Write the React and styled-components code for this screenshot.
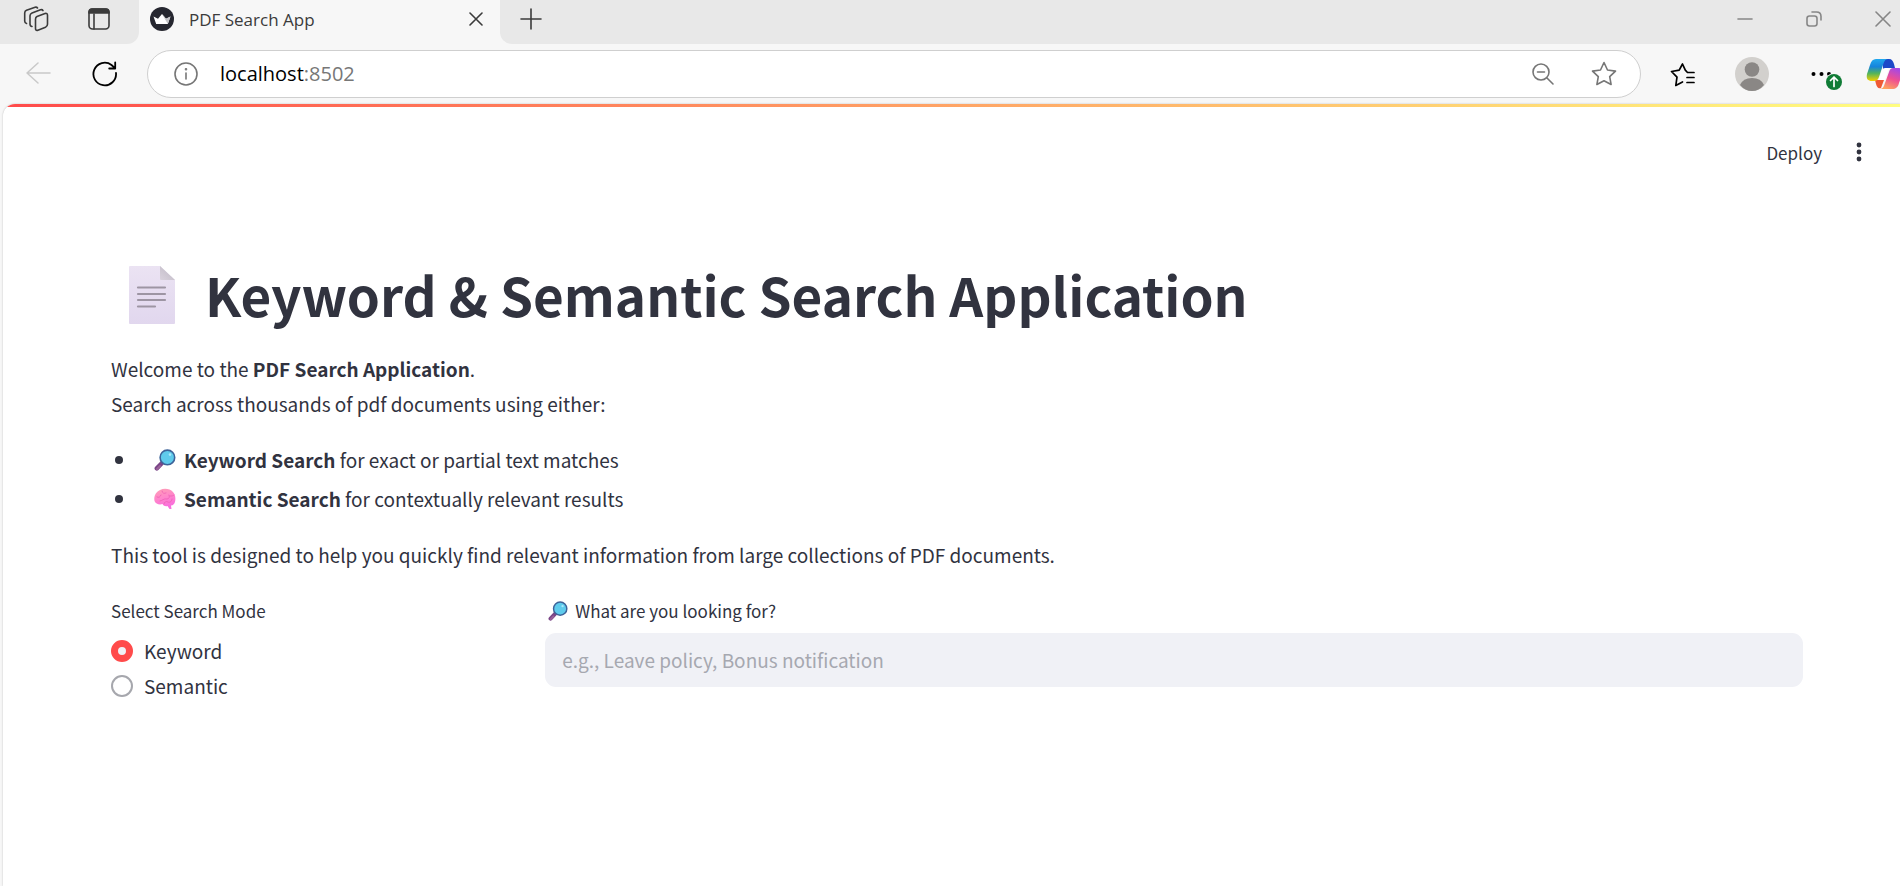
import React from "react";
import styled, { createGlobalStyle } from "styled-components";

const Global = createGlobalStyle`
  * { box-sizing: border-box; }
  html, body { margin: 0; padding: 0; background: #f7f7f7; }
  #root { min-height: 100vh; display: flex; flex-direction: column; }
  button { border: 0; padding: 0; background: none; font: inherit; color: inherit; cursor: pointer; }
  svg { display: block; flex: none; }
`;

const uiFont = `"Open Sans", "Noto Sans", sans-serif`;
const appFont = `"Noto Sans CJK SC", "Noto Sans", sans-serif`;

const TabStrip = styled.div`
  height: 44px;
  display: flex;
  background: #f7f7f7;
  font-family: ${uiFont};
  color: #3b3b3b;
`;
const StripStart = styled.div`
  width: 139px;
  padding-left: 23px;
  display: flex;
  align-items: center;
  gap: 38px;
  padding-bottom: 6px;
  background: #e8e8e8;
  border-bottom-right-radius: 12px;
`;
const StripEnd = styled.div`
  flex: 1;
  display: flex;
  align-items: center;
  padding: 0 9px 6px 20px;
  background: #e8e8e8;
  border-bottom-left-radius: 12px;
`;
const Tab = styled.div`
  width: 361px;
  display: flex;
  align-items: center;
  padding: 0 17px 6px 11px;
  font-size: 17px;
`;
const TabTitle = styled.span`
  flex: 1;
  padding-left: 15px;
  white-space: nowrap;
`;
const WindowButtons = styled.div`
  margin-left: auto;
  display: flex;
  gap: 53px;
  color: #868686;
`;

const Toolbar = styled.div`
  height: 60px;
  display: flex;
  align-items: center;
  padding-left: 26px;
  background: #f7f7f7;
  overflow: hidden;
`;
const NavButtons = styled.div`
  display: flex;
  width: 121px;
  gap: 40px;
`;
const AddressBar = styled.div`
  flex: 1;
  height: 48px;
  display: flex;
  align-items: center;
  padding: 0 23px 0 26px;
  background: #fff;
  border: 1px solid #cfcfcf;
  border-radius: 24px;
  color: #767676;
`;
const Address = styled.div`
  flex: 1;
  padding-left: 22px;
  font-family: ${uiFont};
  font-size: 20px;
  line-height: 28px;
  color: #777;
  b { font-weight: 400; color: #000; }
`;
const AddressActions = styled.div`
  display: flex;
  gap: 36px;
`;
const BrowserActions = styled.div`
  width: 259px;
  flex: none;
  display: flex;
  align-items: center;
  padding-left: 29px;
`;
const ActionButton = styled.button`
  flex: none;
  margin-right: ${(p) => p.$after}px;
`;

const Page = styled.div`
  flex: 1;
  margin-left: 3px;
  background: #fff;
  border-top-left-radius: 12px;
  overflow: hidden;
  box-shadow: 0 0 2px #bbb;
  font-family: ${appFont};
  color: #31333f;
`;
const Decoration = styled.div`
  height: 3px;
  background: linear-gradient(90deg, #ff4b4b, #fffd80);
`;
const AppHeader = styled.header`
  display: flex;
  justify-content: flex-end;
  align-items: center;
  gap: 26px;
  height: 90px;
  padding-right: 30px;
  font-size: 17px;
`;
const Main = styled.main`
  padding: 61px 97px 0 108px;
  font-size: 19px;
  line-height: 35px;
`;
const Title = styled.h1`
  display: flex;
  align-items: center;
  gap: 30px;
  margin: 0 0 21px;
  padding-left: 18px;
  font-size: 53px;
  line-height: 72px;
  font-weight: 700;
`;
const Paragraph = styled.p`
  margin: 0;
`;
const Strong = styled.strong`
  font-weight: 700;
`;
const List = styled.ul`
  list-style: none;
  margin: 19px 0 19px;
  padding: 0;
`;
const Item = styled.li`
  display: flex;
  align-items: center;
  white-space: pre;
  padding: 2px 0;
  &::before {
    content: "";
    width: 8px;
    height: 8px;
    margin: 0 31px 0 4px;
    border-radius: 50%;
    background: #31333f;
  }
  svg { margin-right: 8px; }
`;
const Columns = styled.div`
  display: grid;
  grid-template-columns: 1fr 3fr;
  gap: 15px;
  margin-top: 27px;
`;
const Fieldset = styled.fieldset`
  border: 0;
  margin: 0;
  padding: 0;
  min-width: 0;
`;
const labelText = `
  display: flex;
  align-items: center;
  padding: 0;
  font-size: 17px;
  line-height: 24px;
`;
const Legend = styled.legend`
  ${labelText}
  margin-bottom: 10px;
`;
const FieldLabel = styled.label`
  ${labelText}
  gap: 7px;
  padding-left: 3px;
  margin-bottom: 10px;
`;
const RadioRow = styled.label`
  display: flex;
  align-items: center;
  gap: 11px;
`;
const Radio = styled.input`
  appearance: none;
  width: 22px;
  height: 22px;
  margin: 0;
  border: 2px solid #a6a7ad;
  border-radius: 50%;
  background: #fff;
  &:checked {
    border: 7px solid #ff4b4b;
    background: #f0f2f6;
  }
`;
const TextInput = styled.input`
  display: block;
  width: 100%;
  height: 54px;
  padding: 0 17px 2px;
  border: 0;
  border-radius: 11px;
  background: #f0f1f6;
  color: #31333f;
  font: 19px ${appFont};
  &::placeholder { color: #a6a8b0; opacity: 1; }
`;

const Stroke = ({ w = 24, h = w, sw = 1.6, box, children, ...rest }) => (
  <svg width={w} height={h} viewBox={box || `0 0 ${w} ${h}`} fill="none" stroke="currentColor"
    strokeWidth={sw} strokeLinecap="round" strokeLinejoin="round" aria-hidden="true" {...rest}>
    {children}
  </svg>
);

const Magnifier = ({ size }) => (
  <svg width={size} height={size} viewBox="0 0 22 22" aria-hidden="true">
    <path d="M2.8 19.4 8 14" stroke="#7a4687" strokeWidth="4.4" strokeLinecap="round" />
    <path d="m3 20 3-3" stroke="#9b6299" strokeWidth="2" strokeLinecap="round" />
    <circle cx="13.4" cy="8.4" r="7.3" fill="#5fcbec" stroke="#3d6399" strokeWidth="1.6" />
    <circle cx="16" cy="5.6" r="1.3" fill="#a9e9fb" />
  </svg>
);
const Brain = () => (
  <svg width="22" height="22" viewBox="0 0 22 22" aria-hidden="true">
    <defs>
      <linearGradient id="brain" x1="0" y1="0" x2="0.3" y2="1">
        <stop offset="0" stopColor="#ffa0b4" />
        <stop offset="0.55" stopColor="#ff84cc" />
        <stop offset="1" stopColor="#f96ddd" />
      </linearGradient>
    </defs>
    <path d="M.5 13C-.5 8 2 4 6 2c4-2 10-1.500 13 2 3 3 3 9 1 12-1 1-2 1.500-3 1.500l.5 3.500h-2l-2-3c-2 .5-4 0-5-2-3 1-7 0-8-3z" fill="url(#brain)" />
    <path d="M3 9c2 1 3 0 4-2M8 3c0 2 2 3 4 2M6 13c2 0 4-3 7-2 2 0 3-2 2-4M10 16c0-2 2-3 4-2s4-1 4-3M16 8c2 0 3 0 4-1" fill="none" stroke="#ee5fb4" strokeWidth="0.8" strokeLinecap="round" />
  </svg>
);
const DocumentIcon = () => (
  <svg width="46" height="60" viewBox="0 -2 46 60" aria-hidden="true">
    <defs>
      <linearGradient id="sheet" x1="0" y1="0" x2="0" y2="1">
        <stop offset="0" stopColor="#ebe3f3" />
        <stop offset="1" stopColor="#e1d7ee" />
      </linearGradient>
      <linearGradient id="fold" x1="0" y1="1" x2="1" y2="0">
        <stop offset="0" stopColor="#d9d2dd" />
        <stop offset="1" stopColor="#bdb7c2" />
      </linearGradient>
    </defs>
    <path d="M0 1q0-1 1-1h30l15 14v43q0 1-1 1H1q-1 0-1-1z" fill="url(#sheet)" />
    <path d="M31 0l15 14H32q-1 0-1-1z" fill="url(#fold)" />
    <path d="M9 21.500h27M9 28h27M9 34h27M9 40.500h17" stroke="#9d95a3" strokeWidth="2.200" strokeLinecap="round" />
  </svg>
);
const Copilot = () => (
  <svg width="36" height="32" viewBox="0 0 36 32" aria-hidden="true">
    <defs>
      <linearGradient id="cpA" x1="0" y1="0" x2="0" y2="1">
        <stop offset="0" stopColor="#20a8ee" />
        <stop offset="0.35" stopColor="#1684dc" />
        <stop offset="0.65" stopColor="#52b45c" />
        <stop offset="1" stopColor="#f5d000" />
      </linearGradient>
      <linearGradient id="cpB" x1="0.7" y1="0" x2="0.3" y2="1">
        <stop offset="0" stopColor="#a348e8" />
        <stop offset="0.5" stopColor="#ee4f92" />
        <stop offset="1" stopColor="#ffa55c" />
      </linearGradient>
    </defs>
    <path d="M17 1h6c3 0 4 2 5 5l1 4h-6c-3 0-5 1-6 4z" fill="#1c49c8" />
    <path d="M9 22h9l-3 8c-3 1-4-1-5-4z" fill="#ef5a35" />
    <path d="M10 1h12c-3 0-4 3-5 6l-4 12c-1 3-3 4-5 4H6c-4 0-6-2-5-7L4 7c1-4 3-6 6-6z" fill="url(#cpA)" />
    <path d="M19 10h4l-4 12h-7q1-1 2-4l2-6q1-2 3-2z" fill="#fff" />
    <path d="M27 10h5c4 0 5 3 4 7l-3 8c-1 4-3 6-7 6H14c3 0 4-3 5-6l4-11c1-3 2-4 4-4z" fill="url(#cpB)" />
  </svg>
);

const modes = ["Keyword", "Semantic"];

export default function App() {
  return (
    <>
      <Global />
      <TabStrip>
        <StripStart>
          <button aria-label="Workspaces">
            <Stroke w={26}>
              <path d="M14 10.500l8-3q2.500-.6 2.500 1.800v9q0 2-2 2.900l-7.600 3q-2.400.8-2.400-1.600v-9.400q0-2 1.500-2.700z" />
              <path d="M9 20.500q-2-.3-2-2.500V9.800q0-2 2-2.800l8.500-3.200q1.800-.5 2.500.8" />
              <path d="M3.500 17.500q-1.800-.4-1.800-2.400V6.900q0-2 1.800-2.700l8.600-3q1.600-.4 2.400.8" />
            </Stroke>
          </button>
          <button aria-label="Tab actions">
            <Stroke w={24}>
              <rect x="2" y="2" width="20" height="20" rx="3.500" />
              <path d="M2 6V5q0-3 3-3h14q3 0 3 3v1z" fill="currentColor" />
              <path d="M7 7v15" />
            </Stroke>
          </button>
        </StripStart>
        <Tab>
          <svg width="24" height="24" viewBox="0 0 24 24" aria-hidden="true">
            <circle cx="12" cy="12" r="12" fill="#262730" />
            <path d="M3.500 9.500l4.500 2.300L12 7l4 4.800 4.500-2.300-2.700 7.500H6.200z" fill="#fff" />
            <path d="M12 7l4 4.800 4.500-2.300-2.700 7.500z" fill="#c4c4c8" />
          </svg>
          <TabTitle>PDF Search App</TabTitle>
          <button aria-label="Close tab">
            <Stroke w={14}><path d="M1 1l12 12M13 1 1 13" /></Stroke>
          </button>
        </Tab>
        <StripEnd>
          <button aria-label="New tab">
            <Stroke w={22}><path d="M11 1v20M1 11h20" /></Stroke>
          </button>
          <WindowButtons>
            <button aria-label="Minimize"><Stroke w={16}><path d="M1 8h14" /></Stroke></button>
            <button aria-label="Restore">
              <Stroke w={16}>
                <rect x="1" y="5" width="10" height="10" rx="2.500" />
                <path d="M6 1h4.500Q15 1 15 5.500V9" />
              </Stroke>
            </button>
            <button aria-label="Close window"><Stroke w={16}><path d="M1 1l14 14M15 1 1 15" /></Stroke></button>
          </WindowButtons>
        </StripEnd>
      </TabStrip>

      <Toolbar>
        <NavButtons>
          <button aria-label="Back">
            <Stroke w={26} color="#c9c9c9" sw={1.500}><path d="M24 12H1M12 2 1 12l11 10" /></Stroke>
          </button>
          <button aria-label="Reload">
            <Stroke w={26} color="#000" sw={1.800}>
              <path d="M24 12A11.300 11.300 0 1 1 19.500 4L23 7.200M23.200 1.500v6h-6" />
            </Stroke>
          </button>
        </NavButtons>
        <AddressBar>
          <button aria-label="Site information">
            <Stroke w={24}>
              <circle cx="12" cy="12" r="11" />
              <path d="M12 11v6" />
              <circle cx="12" cy="7.300" r="0.500" fill="currentColor" />
            </Stroke>
          </button>
          <Address><b>localhost</b>:8502</Address>
          <AddressActions>
            <button aria-label="Zoom out">
              <Stroke w={24}><circle cx="10" cy="10" r="8" /><path d="M6.500 10h7M16 16l6 6" /></Stroke>
            </button>
            <button aria-label="Add to favorites">
              <Stroke w={26}>
                <path d="M13 1.500l3.500 7.500 8 1.100-5.800 5.600 1.400 7.800L13 19.700 5.900 23.500l1.400-7.800-5.800-5.600 8-1.100z" />
              </Stroke>
            </button>
          </AddressActions>
        </AddressBar>
        <BrowserActions>
          <ActionButton aria-label="Favorites" $after={39}>
            <Stroke w={26} color="#000" sw={1.700}>
              <path d="M24 11.500h-6.500l-2.200-2.300L12.500 3 9.200 9.200 1.500 10.500 7 16.200 5.800 24.500l6.700-3.500M17 16.500H24M17 21.500H24" />
            </Stroke>
          </ActionButton>
          <ActionButton aria-label="Profile" $after={42}>
            <svg width="34" height="34" viewBox="0 0 34 34" aria-hidden="true">
              <circle cx="17" cy="17" r="17" fill="#d2d0cd" />
              <circle cx="17" cy="12.500" r="7.300" fill="#8a8785" />
              <path d="M5 28q3-7 12-7t12 7q-5 6-12 6T5 28z" fill="#8a8785" />
            </svg>
          </ActionButton>
          <ActionButton aria-label="Settings and more" $after={23}>
            <svg width="32" height="34" viewBox="0 0 32 34" aria-hidden="true">
              <g fill="#000"><circle cx="2.500" cy="17" r="2" /><circle cx="10.500" cy="17" r="2" /><circle cx="18" cy="17" r="2" /></g>
              <circle cx="23" cy="25" r="9" fill="#f7f7f7" />
              <circle cx="23" cy="25" r="8" fill="#107c36" />
              <path d="M23 29.500v-9M19.500 23.500l3.500-3.500 3.500 3.500" fill="none" stroke="#fff" strokeWidth="1.700" strokeLinecap="round" strokeLinejoin="round" />
            </svg>
          </ActionButton>
          <ActionButton aria-label="Copilot" $after={0}><Copilot /></ActionButton>
        </BrowserActions>
      </Toolbar>

      <Page>
        <Decoration />
        <AppHeader>
          <button>Deploy</button>
          <button aria-label="Main menu">
            <svg width="22" height="22" viewBox="0 0 22 22" fill="#31333f" aria-hidden="true">
              <circle cx="11" cy="4" r="2.400" /><circle cx="11" cy="11" r="2.400" /><circle cx="11" cy="18" r="2.400" />
            </svg>
          </button>
        </AppHeader>
        <Main>
          <Title><DocumentIcon />Keyword &amp; Semantic Search Application</Title>
          <Paragraph>
            Welcome to the <Strong>PDF Search Application</Strong>.<br />
            Search across thousands of pdf documents using either:
          </Paragraph>
          <List>
            <Item><Magnifier size={22} /><Strong>Keyword Search</Strong> for exact or partial text matches</Item>
            <Item><Brain /><Strong>Semantic Search</Strong> for contextually relevant results</Item>
          </List>
          <Paragraph>
            This tool is designed to help you quickly find relevant information from large collections of PDF documents.
          </Paragraph>
          <Columns>
            <Fieldset>
              <Legend>Select Search Mode</Legend>
              {modes.map((mode, i) => (
                <RadioRow key={mode}>
                  <Radio type="radio" name="mode" value={mode} defaultChecked={i === 0} />
                  {mode}
                </RadioRow>
              ))}
            </Fieldset>
            <div>
              <FieldLabel htmlFor="query"><Magnifier size={20} />What are you looking for?</FieldLabel>
              <TextInput id="query" type="text" placeholder="e.g., Leave policy, Bonus notification" />
            </div>
          </Columns>
        </Main>
      </Page>
    </>
  );
}
